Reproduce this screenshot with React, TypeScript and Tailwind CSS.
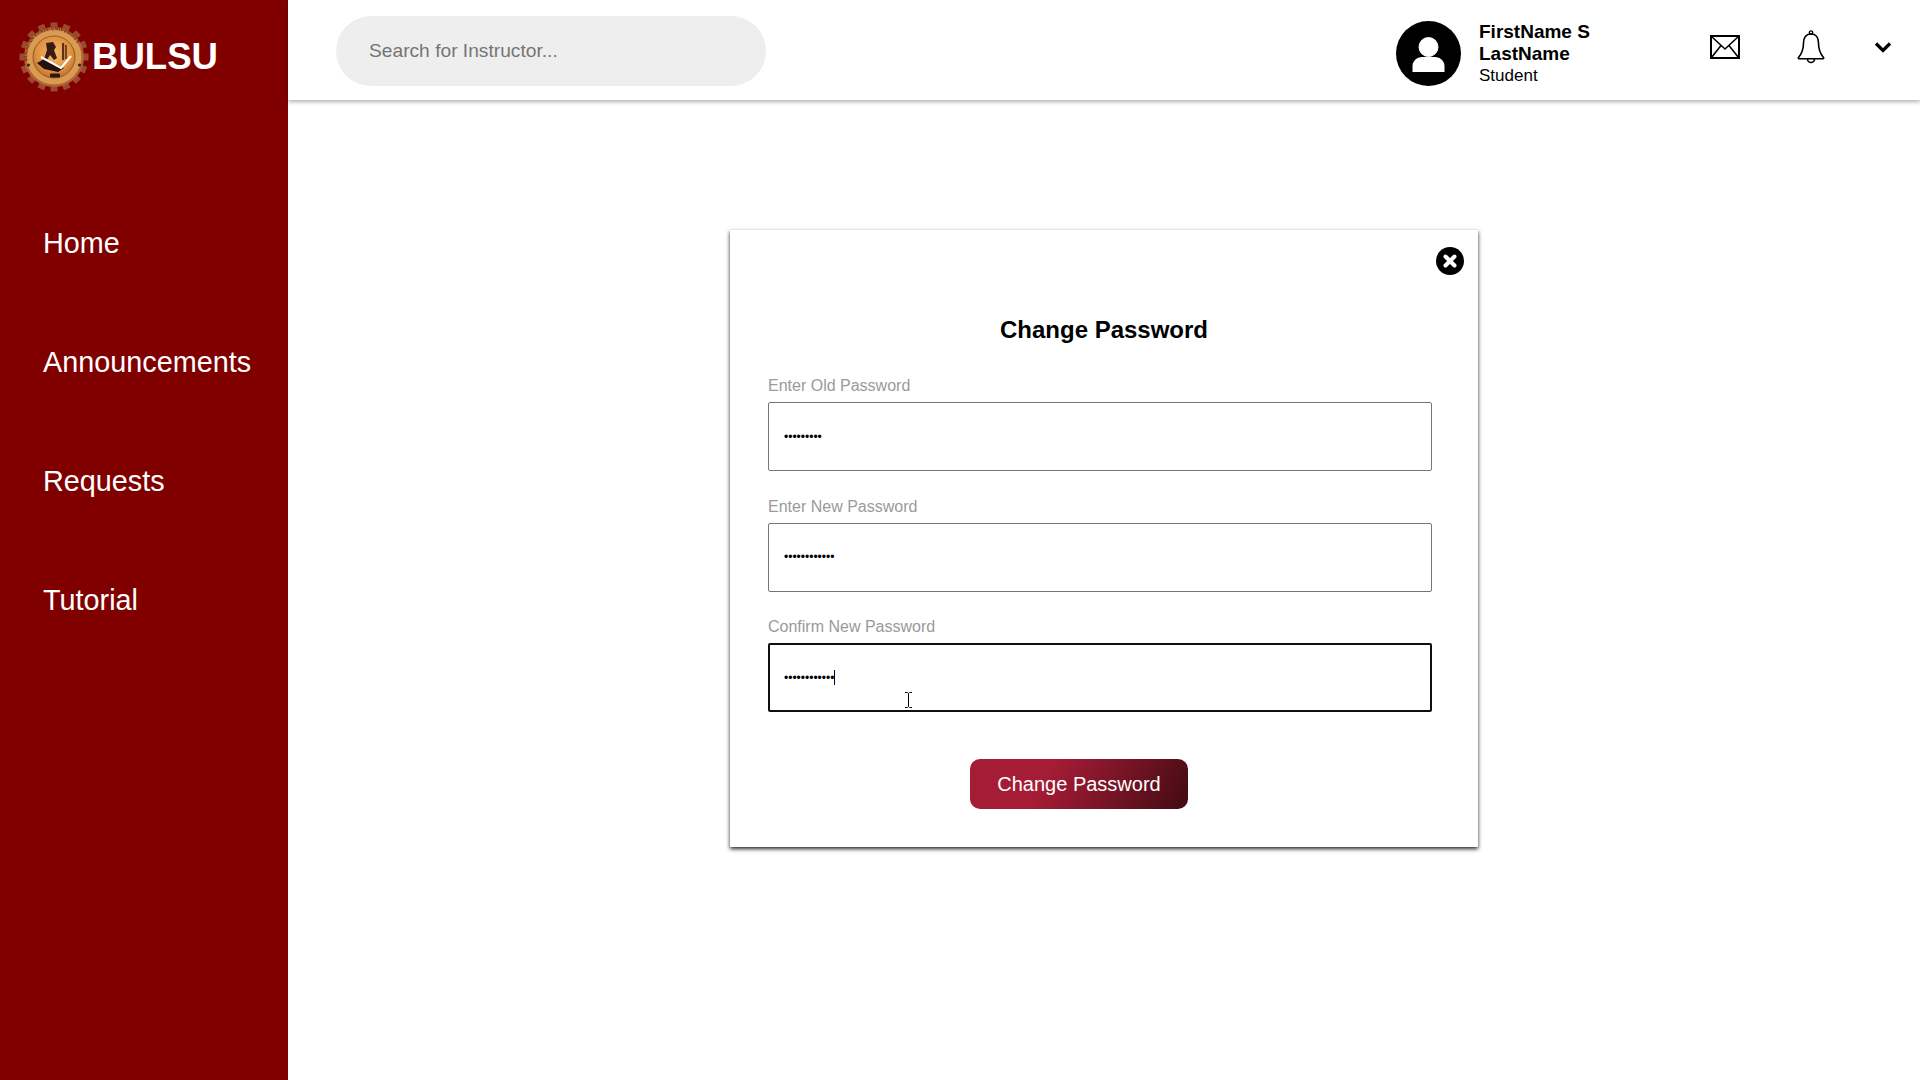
import { useState } from 'react';

const navItems = ['Home', 'Announcements', 'Requests', 'Tutorial'];

const teeth = Array.from({ length: 16 }, (_, i) => i * 22.5);

function Logo() {
  return (
    <svg width="72" height="72" viewBox="0 0 72 72" className="shrink-0 blur-[0.4px]">
      <defs>
        <radialGradient id="seal" cx="50%" cy="42%" r="58%">
          <stop offset="0%" stopColor="#f4b86c" />
          <stop offset="70%" stopColor="#e09240" />
          <stop offset="100%" stopColor="#bd732e" />
        </radialGradient>
        <path id="arc" d="M9.5 40 A26.8 26.8 0 1 1 62.5 40" />
      </defs>
      {teeth.map((a) => (
        <rect key={a} x="32.5" y="1.5" width="7" height="8" fill="#9a4a2e" transform={`rotate(${a} 36 36)`} />
      ))}
      <circle cx="36" cy="36" r="30" fill="#b06238" />
      <circle cx="36" cy="36" r="27.5" fill="#d99a52" />
      <text fontSize="5" fill="#6b2a10" fontFamily="Liberation Serif, serif" fontWeight="700">
        <textPath href="#arc">BULACAN STATE UNIVERSITY</textPath>
      </text>
      <circle cx="36" cy="36" r="21" fill="url(#seal)" stroke="#8a4a20" strokeWidth="0.8" />
      <circle cx="10.5" cy="44" r="1.6" fill="#3a2418" />
      <circle cx="61.5" cy="44" r="1.6" fill="#3a2418" />
      <path d="M28 22 l7 -1 l3 5 l-2 3 l3 8 l-3 2 l-4 -5 l-3 5 l-3 -1 l3 -9 z" fill="#3a1c12" />
      <rect x="44" y="22" width="2.2" height="17" fill="#5a3018" />
      <rect x="47" y="24" width="2" height="14" fill="#7a4420" />
      <path d="M19 42 l7 -4 l20 9 l-6 4 l-14 -3 z" fill="#241210" />
      <path d="M23 36 L43 47 L53 35" fill="none" stroke="#ffffff" strokeWidth="2" />
      <rect x="32" y="52.5" width="10" height="4" rx="1" fill="#2c1610" />
    </svg>
  );
}

function Field({ label, value, focused }: { label: string; value: string; focused?: boolean }) {
  const [text, setText] = useState(value);
  return (
    <div className="flex flex-col">
      <label className="h-[29px] pt-[4px] text-[16px] leading-[18px] text-[#9a9a9a]">{label}</label>
      <div className="relative">
        <input
          type="password"
          value={text}
          onChange={(e) => setText(e.target.value)}
          className={`block h-[69px] w-full rounded-[2px] bg-white text-[12px] text-black outline-none ${
            focused ? 'border-[2px] border-[#101010] px-[14px]' : 'border border-[#767676] px-[15px]'
          }`}
        />
        {focused && (
          <>
            {/* caret */}
            <span className="absolute left-[66px] top-[27px] h-[15px] w-px bg-black" />
            {/* mouse cursor */}
            <svg width="9" height="16" viewBox="0 0 9 16" className="absolute left-[136px] top-[49px]">
              <path d="M1 .5h2.5l1 1 1-1H8M4.5 1.5v13M1 15.5h2.5l1-1 1 1H8" fill="none" stroke="#000" strokeWidth="1" />
            </svg>
          </>
        )}
      </div>
    </div>
  );
}

export default function App() {
  return (
    <div className="flex h-[1080px] w-[1920px] overflow-hidden bg-white font-['Liberation_Sans',Arial,sans-serif]">
      <aside className="flex w-[288px] shrink-0 flex-col bg-[#800000] text-white">
        <div className="flex h-[114px] items-start pl-[18px] pt-[21px]">
          <Logo />
          <span className="ml-[2px] mt-[14px] text-[36.6px] font-bold leading-[44px]">BULSU</span>
        </div>
        <nav className="mt-[113px] flex flex-col gap-[87px] pl-[43px]">
          {navItems.map((item) => (
            <a key={item} className="h-[32px] text-[28.8px] leading-[32px]">
              {item}
            </a>
          ))}
        </nav>
      </aside>

      <div className="flex min-w-0 flex-1 flex-col">
        <header className="flex h-[100px] shrink-0 items-center bg-white pl-[48px] shadow-[0_2px_4px_rgba(0,0,0,0.3)]">
          <div className="mt-[1px] flex h-[70px] w-[430px] items-center rounded-full bg-[#eeeeee] pl-[33px] text-[19.2px] text-[#757575]">
            <span className="mt-[1px]">Search for Instructor...</span>
          </div>
          <div className="ml-[630px] mt-[6px] h-[65px] w-[65px] rounded-full bg-black">
            <svg viewBox="0 0 65 65" className="h-full w-full">
              <circle cx="32.5" cy="26" r="9.5" fill="#fff" stroke="#fff" strokeWidth="1" />
              <path d="M16.5 51 V45 a9 9 0 0 1 9 -9 h14 a9 9 0 0 1 9 9 V51 Z" fill="#fff" />
            </svg>
          </div>
          <div className="ml-[18px] mt-[7px] w-[150px] text-black">
            <div className="text-[19px] font-bold leading-[22px]">FirstName S</div>
            <div className="text-[19px] font-bold leading-[22px]">LastName</div>
            <div className="pt-[1px] text-[17px] leading-[20px]">Student</div>
          </div>
          {/* mail */}
          <svg width="30" height="24" viewBox="0 0 30 24" className="ml-[81px] -mt-[6px] shrink-0">
            <rect x="1" y="1" width="28" height="22" fill="none" stroke="#000" strokeWidth="2" />
            <path d="M1.5 1.5 L15 14 L28.5 1.5 M1.5 22.5 L11 10.5 M28.5 22.5 L19 10.5" fill="none" stroke="#000" strokeWidth="1.6" />
          </svg>
          {/* bell */}
          <svg width="28" height="34" viewBox="0 0 28 34" className="ml-[57px] -mt-[6px] shrink-0">
            <path
              d="M14 4 C8.5 4 6.5 8.5 6.5 13 C6.5 20 4.5 24 1.5 27.5 C1 28 1.3 28.7 2 28.7 H26 C26.7 28.7 27 28 26.5 27.5 C23.5 24 21.5 20 21.5 13 C21.5 8.5 19.5 4 14 4 Z"
              fill="none"
              stroke="#000"
              strokeWidth="1.6"
            />
            <circle cx="14" cy="2.6" r="1.7" fill="none" stroke="#000" strokeWidth="1.4" />
            <path d="M10.5 29 a3.5 3.5 0 0 0 7 0" fill="none" stroke="#000" strokeWidth="1.6" />
          </svg>
          {/* chevron */}
          <svg width="18" height="12" viewBox="0 0 18 12" className="ml-[49px] -mt-[6px] shrink-0">
            <path d="M2 2.5 L9 9.5 L16 2.5" fill="none" stroke="#000" strokeWidth="3.2" />
          </svg>
        </header>

        <main className="flex flex-1 justify-center pt-[130px]">
          <div className="relative h-[617px] w-[748px] bg-white px-[38px] shadow-[0_2px_4px_rgba(0,0,0,0.85)]">
            <button className="absolute right-[14px] top-[17px] flex h-[28px] w-[28px] items-center justify-center rounded-full bg-black">
              <svg width="16" height="16" viewBox="0 0 16 16">
                <path d="M3.5 3.5 L12.5 12.5 M12.5 3.5 L3.5 12.5" stroke="#fff" strokeWidth="4" strokeLinecap="round" />
              </svg>
            </button>
            <h2 className="pt-[86px] text-center text-[24px] font-bold leading-[28px] text-black">Change Password</h2>
            <div className="mt-[29px] flex flex-col gap-[22.5px] pr-[8px]">
              <Field label="Enter Old Password" value="password1" />
              <Field label="Enter New Password" value="newpassword1" />
              <Field label="Confirm New Password" value="newpassword1" focused />
            </div>
            <div className="mt-[47px] flex justify-center pr-[50px]">
              <button className="h-[50px] w-[218px] rounded-[10px] bg-[linear-gradient(120deg,#a51c36_35%,#420b12_100%)] pb-[1px] text-[20px] text-white">
                Change Password
              </button>
            </div>
          </div>
        </main>
      </div>
    </div>
  );
}
